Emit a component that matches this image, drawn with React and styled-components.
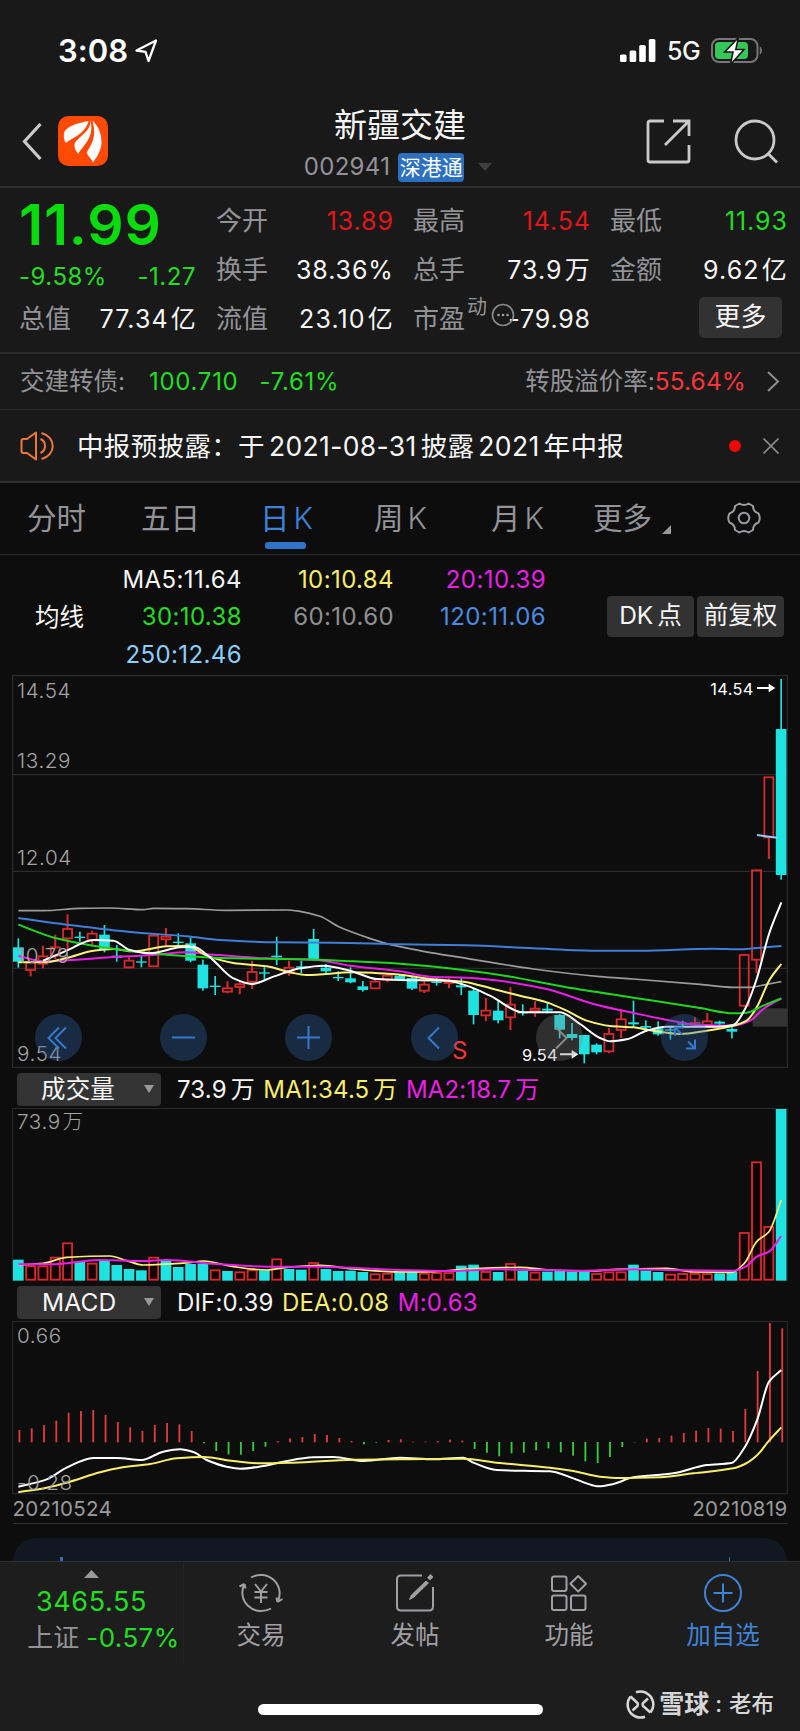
import React from "react";
import styled, { createGlobalStyle } from "styled-components";

const C = {
  up: "#e0171b",
  upSoft: "#f8363a",
  down: "#22dd22",
  white: "#f6f6f6",
  grey: "#939397",
  blue: "#3f83d8",
  yellow: "#f7ee6c",
  magenta: "#ea1fe6",
  cyan: "#1fe3e0",
  barRed: "#d6292d",
  grid: "#2b2b2b",
};

const Global = createGlobalStyle`
  *, *::before, *::after { box-sizing: border-box; }
  body {
    margin: 0;
    background: #0d0d0d;
    font-family: Inter, "Noto Sans CJK SC", sans-serif;
    font-weight: 400;
    color: ${C.white};
  }
`;

const Screen = styled.div`
  width: 800px;
  height: 1731px;
  overflow: hidden;
  display: flex;
  flex-direction: column;
  background: #0d0d0d;
  line-height: 1;
  white-space: nowrap;
`;

const Colored = styled.span`
  color: ${(p) => p.$c};
  letter-spacing: ${(p) => p.$ls || 0}px;
`;
const Unit = styled.span`
  margin-left: ${(p) => p.$gap ?? 4}px;
`;

/* ---------- status bar ---------- */
const StatusBar = styled.header`
  height: 96px;
  padding: 6px 37px 0 58px;
  display: flex;
  align-items: center;
  background: #191919;
`;
const Clock = styled.span`
  font-size: 31px;
  font-weight: 600;
  letter-spacing: 0.1px;
  margin-right: 6px;
  color: #fff;
`;
const StatusRight = styled.div`
  margin-left: auto;
  display: flex;
  align-items: center;
`;
const Network = styled.span`
  margin: 1px 11px 0 11px;
  font-size: 25px;
  font-weight: 500;
  letter-spacing: -0.6px;
`;

/* ---------- title bar ---------- */
const TitleBar = styled.div`
  height: 92px;
  display: grid;
  grid-template-columns: 260px 1fr 260px;
  border-bottom: 2px solid #2e2e2e;
  background: #191919;
`;
const NavLeft = styled.div`
  display: flex;
  align-items: center;
  gap: 16px;
  padding: 1px 0 0 22px;
`;
const NavRight = styled.div`
  display: flex;
  align-items: center;
  justify-content: flex-end;
  gap: 43px;
  padding: 1px 21px 0 0;
`;
const TitleStack = styled.div`
  display: flex;
  flex-direction: column;
  align-items: center;
  padding-top: 12px;
`;
const StockName = styled.h1`
  margin: 0;
  font-size: 33px;
  font-weight: 400;
  line-height: 34px;
`;
const CodeRow = styled.div`
  display: flex;
  align-items: center;
  margin: 11px 0 0 -4px;
  font-size: 24px;
  letter-spacing: 0.3px;
  color: ${C.grey};
`;
const Tag = styled.span`
  margin: 0 14px 0 8px;
  width: 66px;
  height: 29px;
  border-radius: 4px;
  display: flex;
  align-items: center;
  justify-content: center;
  background: #2e70c0;
  color: #fff;
  font-size: 21px;
  letter-spacing: 0;
`;

/* ---------- quote ---------- */
const Quote = styled.section`
  height: 166px;
  padding: 9px 13px 0 19px;
  display: grid;
  grid-template-columns: repeat(4, 177px);
  grid-template-rows: repeat(3, 49px);
  column-gap: 20px;
  border-bottom: 2px solid #2b2b2b;
  background: #191919;
`;
const PriceBlock = styled.div`
  grid-row: span 2;
  display: flex;
  flex-direction: column;
  color: ${C.down};
`;
const Price = styled.strong`
  margin-top: -1px;
  font-size: 57px;
  font-weight: 600;
  line-height: 58px;
  letter-spacing: 0.8px;
  color: #08dc0c;
`;
const Change = styled.div`
  display: flex;
  justify-content: space-between;
  margin-top: 10px;
  font-size: 24px;
  line-height: 26px;
  letter-spacing: 0.5px;
`;
const Cell = styled.div`
  position: relative;
  display: flex;
  align-items: center;
  justify-content: space-between;
  font-size: 26px;
`;
const Label = styled.span`
  color: ${C.grey};
`;
const Value = styled.span`
  margin-right: -0.8px;
  color: ${(p) => p.$c || C.white};
  font-size: 25px;
  letter-spacing: ${(p) => p.$ls ?? 0.8}px;
`;
const Sup = styled.span`
  margin: 0 4px 0 2px;
  font-size: 20px;
  color: ${C.grey};
  position: relative;
  top: -6px;
`;
const PeHint = styled.span`
  position: absolute;
  left: 52px;
  top: 8px;
  display: flex;
`;
const MoreButton = styled.button`
  justify-self: end;
  align-self: center;
  margin: 0 5px 3px 0;
  width: 83px;
  height: 41px;
  padding: 0 0 1px;
  border: 0;
  border-radius: 5px;
  background: #323232;
  color: ${C.white};
  font: inherit;
  font-size: 26px;
`;

/* ---------- linked bond / notice ---------- */
const BondRow = styled.div`
  height: 57px;
  padding: 0 20px 0 20px;
  display: flex;
  align-items: center;
  font-size: 24.5px;
  color: ${C.grey};
  border-bottom: 1px solid #2b2b2b;
  background: #191919;
`;
const BondValue = styled.span`
  margin-left: ${(p) => p.$gap}px;
  color: ${C.down};
  font-size: 24px;
  letter-spacing: 0.7px;
`;
const BondRight = styled.span`
  margin-left: auto;
  margin-right: 21px;
`;
const Notice = styled.div`
  height: 73px;
  padding: 0 21px 0 20px;
  display: flex;
  align-items: center;
  font-size: 26.5px;
  letter-spacing: 0.35px;
  border-bottom: 2px solid #303030;
  background: #191919;
`;
const NoticeText = styled.span`
  margin-left: 22px;
  flex: 1;
`;
const Dot = styled.i`
  width: 12px;
  height: 12px;
  margin-right: 22px;
  border-radius: 50%;
  background: #f20505;
`;

/* ---------- period tabs ---------- */
const Tabs = styled.nav`
  height: 72px;
  padding-left: 27px;
  display: grid;
  grid-template-columns: 114px 119px 114px 117px 102px 134px 60px;
  align-items: stretch;
  border-bottom: 1px solid #2b2b2b;
  font-size: 29.5px;
  color: ${C.grey};
`;
const Tab = styled.div`
  position: relative;
  display: flex;
  align-items: center;
  padding-bottom: 1px;
  color: ${(p) => (p.$active ? C.blue : C.grey)};
  &::after {
    content: "";
    display: ${(p) => (p.$active ? "block" : "none")};
    position: absolute;
    left: 5px;
    bottom: 5px;
    width: 41px;
    height: 7px;
    border-radius: 3px;
    background: #2f74c8;
  }
`;
const TabK = styled.span`
  margin-left: 4px;
  font-size: 30px;
  font-weight: 300;
`;
const MoreMark = styled.span`
  margin: 22px 0 0 10px;
  display: flex;
`;

/* ---------- moving average legend ---------- */
const Legend = styled.section`
  height: 120px;
  padding: 4px 16px 0 35px;
  display: flex;
  align-items: center;
`;
const LegendTitle = styled.span`
  width: 48px;
  font-size: 24.5px;
`;
const LegendGrid = styled.div`
  display: grid;
  grid-template-columns: 159px 152px 152px;
  grid-auto-rows: 37.6px;
  align-items: center;
  justify-items: end;
  font-size: 24px;
  flex: 1;
  justify-content: start;
`;
const Pill = styled.button`
  width: 87px;
  height: 41px;
  margin: -2px 0 0 3px;
  padding: 0 0 1px;
  border: 0;
  border-radius: 4px;
  background: #323232;
  color: ${C.white};
  font: inherit;
  font-size: 24.5px;
`;

/* ---------- charts ---------- */
const ChartBox = styled.div`
  position: relative;
  height: ${(p) => p.$h}px;
`;
const Plot = styled.svg`
  display: block;
  width: 800px;
  height: ${(p) => p.$h}px;
  overflow: visible;
  font-family: Inter, "Noto Sans CJK SC", sans-serif;
`;
const ControlRow = styled.div`
  position: absolute;
  left: 35px;
  top: 338.5px;
  width: 673px;
  display: flex;
  justify-content: space-between;
`;
const RoundButton = styled.button`
  width: 47px;
  height: 47px;
  padding: 0;
  border: 0;
  border-radius: 50%;
  background: ${(p) => (p.$muted ? "rgba(125,125,130,.3)" : "rgba(49,100,170,.35)")};
  svg { display: block; }
`;
const IndicatorBar = styled.div`
  height: 40px;
  padding: 2px 0 0 17px;
  display: flex;
  align-items: center;
  font-size: 24px;
  letter-spacing: 0.15px;
`;
const Select = styled.div`
  width: 144px;
  height: 33px;
  margin-right: 16px;
  padding: 0 7px 0 ${(p) => p.$pad}px;
  display: flex;
  align-items: center;
  justify-content: space-between;
  border-radius: 4px;
  background: #333;
  font-size: 24.5px;
`;
const Stat = styled.span`
  margin-right: 8.5px;
  padding-top: 1px;
  color: ${(p) => p.$c};
`;
const Dates = styled.div`
  height: 30px;
  margin: 0 12.5px;
  padding-top: 1px;
  display: flex;
  align-items: center;
  justify-content: space-between;
  font-size: 20.5px;
  letter-spacing: 0.3px;
  color: #9a9a9a;
  border-bottom: 1px solid #333;
`;
const Card = styled.div`
  height: 23px;
  margin: 14px 13px 0;
  padding: 19px 57px 0 47px;
  display: flex;
  justify-content: space-between;
  border-radius: 24px 24px 0 0;
  background: #111821;
`;
const CardTick = styled.i`
  width: ${(p) => p.$w}px;
  height: 4px;
  background: #326bb3;
`;

/* ---------- bottom bar ---------- */
const BottomBar = styled.footer`
  flex: 1;
  border-top: 1px solid #303030;
  background: #1d1d1d;
`;
const BottomItems = styled.div`
  height: 102px;
  display: grid;
  grid-template-columns: 184px repeat(4, 154px);
`;
const IndexBox = styled.div`
  padding-top: 8px;
  display: flex;
  flex-direction: column;
  align-items: center;
  border-right: 1px solid #242424;
`;
const IndexValue = styled.span`
  margin-top: 9px;
  font-size: 27px;
  line-height: 30px;
  letter-spacing: 0.6px;
  color: ${C.down};
`;
const IndexLine = styled.span`
  display: flex;
  align-items: center;
  gap: 7px;
  margin: 5px 0 0 24px;
  font-size: 26px;
  line-height: 32px;
  color: ${C.grey};
`;
const Action = styled.div`
  padding-top: 11px;
  display: flex;
  flex-direction: column;
  align-items: center;
  gap: 8px;
  font-size: 24.5px;
  line-height: 28px;
  color: ${(p) => p.$c || "#a0a0a4"};
`;
const HomeArea = styled.div`
  height: 67px;
  padding: 0 26px 0 258px;
  display: flex;
  align-items: center;
`;
const HomeIndicator = styled.i`
  width: 285px;
  height: 11px;
  margin-top: 24px;
  border-radius: 6px;
  background: #fff;
`;
const Watermark = styled.span`
  margin: 14px 0 0 auto;
  display: flex;
  align-items: center;
  font-size: 22.5px;
  font-weight: 500;
  color: #d6d6d6;
`;
const WatermarkName = styled.b`
  margin: 0 6px 0 4px;
  font-size: 25px;
  font-weight: 700;
`;
const WatermarkUser = styled.span`
  margin-left: 7px;
`;

/* ---------- data: [rising, high, bodyTop, bodyBottom, low] on the 3x grid ---------- */
const candles = [
  [0, 178, 205, 248, 266], [1, 245, 250, 273, 292], [1, 200, 232, 254, 268], [1, 167, 205, 230, 240],
  [1, 106, 150, 178, 210], [0, 158, 173, 177, 188], [1, 155, 164, 183, 202], [0, 138, 167, 210, 220],
  [0, 198, 230, 236, 248], [1, 232, 245, 265, 268], [0, 230, 247, 251, 265], [1, 168, 170, 262, 262],
  [1, 147, 173, 181, 205], [0, 163, 188, 192, 202], [0, 175, 193, 245, 250], [0, 242, 257, 328, 335],
  [0, 291, 320, 324, 348], [1, 307, 328, 338, 343], [1, 310, 316, 324, 346], [1, 245, 279, 308, 330],
  [0, 265, 280, 284, 300], [0, 173, 230, 235, 258], [1, 245, 266, 282, 290], [0, 245, 262, 266, 282],
  [0, 150, 180, 240, 245], [0, 255, 266, 277, 282], [0, 277, 294, 298, 306], [0, 265, 298, 310, 313],
  [0, 306, 322, 333, 338], [1, 298, 308, 328, 330], [1, 284, 290, 302, 310], [0, 285, 290, 300, 305],
  [0, 290, 297, 329, 333], [1, 307, 317, 335, 342], [0, 298, 308, 312, 320], [1, 298, 308, 312, 328],
  [0, 295, 319, 325, 348], [0, 330, 335, 408, 436], [1, 357, 395, 409, 427], [0, 365, 395, 424, 433],
  [1, 325, 377, 415, 453], [0, 376, 399, 403, 410], [1, 367, 389, 396, 413], [0, 368, 389, 395, 403],
  [0, 405, 408, 452, 478], [0, 432, 465, 477, 484], [0, 468, 468, 526, 553], [0, 493, 497, 520, 526],
  [1, 447, 465, 517, 523], [1, 390, 421, 453, 477], [0, 365, 430, 436, 445], [0, 424, 441, 446, 458],
  [0, 427, 448, 466, 470], [0, 440, 451, 455, 482], [0, 425, 433, 437, 448], [1, 415, 432, 436, 445],
  [1, 402, 427, 438, 440], [0, 425, 428, 434, 438], [0, 445, 450, 458, 478], [1, 227, 228, 380, 383],
  [1, -28, -26, 242, 282], [1, -307, -305, -125, -60], [0, -600, -450, -12, 2],
];

const volumes = [
  [0, 62], [1, 44], [1, 44], [1, 70], [1, 113], [0, 56], [1, 52], [0, 58], [0, 46], [0, 34], [0, 30], [1, 70],
  [0, 62], [0, 40], [0, 49], [0, 50], [1, 32], [0, 28], [1, 26], [1, 32], [0, 30], [1, 65], [0, 34], [0, 32],
  [1, 54], [0, 34], [0, 28], [0, 29], [0, 25], [1, 20], [1, 22], [0, 26], [0, 26], [1, 22], [1, 24], [1, 24],
  [0, 44], [0, 47], [1, 27], [0, 25], [1, 51], [0, 29], [1, 25], [0, 26], [0, 31], [0, 25], [0, 25], [1, 21],
  [1, 26], [1, 26], [0, 47], [0, 29], [0, 25], [1, 19], [1, 21], [1, 21], [1, 21], [0, 21], [0, 26], [1, 144],
  [1, 356], [1, 162], [0, 514],
];

const macd = [
  37, 42, 52, 65, 89, 94, 97, 82, 61, 45, 34, 52, 58, 54, 34, -4, -27, -37, -38, -27, -14, 4, 12, 16, 25, 22, 13,
  4, -7, -2, 7, 9, 2, 2, 4, 8, 5, -21, -32, -43, -34, -32, -25, -19, -31, -41, -58, -63, -45, -15, -1, 11, 13, 20,
  28, 35, 43, 41, 34, 100, 214, 358, 342,
];

const lines = {
  ma60: "55,95 130,95 240,88 330,87 430,92 460,88 560,89 680,94 860,93 900,97 960,112 1020,145 1100,175 1160,194 1200,203 1270,217 1400,238 1600,270 1800,293 1900,300 2100,316 2200,325 2250,325 2300,316 2344,308",
  ma120: "55,117 200,137 400,160 560,172 660,183 830,190 1000,191 1200,196 1400,199 1600,208 1800,215 1920,215 2140,209 2220,211 2260,208 2344,201",
  ma30: "55,137 165,177 280,200 400,217 500,227 700,238 900,241 1060,247 1200,254 1290,262 1500,288 1700,325 1900,356 2100,387 2200,403 2240,401 2290,380 2344,358",
  ma20: "55,230 130,247 200,244 330,235 460,228 560,220 640,227 800,238 950,243 1050,260 1200,277 1290,293 1400,296 1480,303 1640,330 1780,375 1900,402 2030,428 2100,438 2200,440 2250,425 2290,390 2344,358",
  ma10: "55,250 130,250 200,237 280,215 340,210 400,217 500,202 560,200 620,230 700,252 800,262 870,280 920,288 1060,280 1200,287 1290,300 1390,308 1480,330 1560,350 1640,370 1700,395 1760,425 1830,441 1900,445 1960,455 2040,465 2120,455 2200,440 2240,425 2270,385 2310,300 2344,255",
  ma5: "129,245 160,232 200,215 280,183 340,185 390,213 450,223 540,205 580,203 630,235 700,298 755,315 820,293 900,268 970,260 1050,275 1130,300 1200,303 1340,305 1400,320 1470,350 1570,400 1680,400 1740,435 1800,477 1830,487 1880,481 1940,455 2000,443 2150,443 2200,438 2235,390 2270,300 2307,165 2344,70",
  vol1: "55,615 130,610 200,592 330,588 380,602 430,615 560,609 610,603 700,620 800,630 860,622 960,616 1060,627 1200,636 1300,635 1400,627 1560,622 1650,630 1770,633 1850,628 2000,625 2080,636 2195,637 2233,610 2270,545 2307,515 2344,420",
  vol2: "55,613 150,613 300,600 430,603 500,600 650,612 800,620 950,620 1200,630 1340,633 1500,628 1750,632 1900,628 2050,631 2200,632 2240,618 2270,590 2307,575 2344,528",
  dif: "55,620 140,598 200,563 280,534 350,534 425,540 490,515 540,508 580,516 620,540 680,560 720,566 790,558 850,545 940,532 1000,531 1090,543 1200,533 1300,538 1390,533 1420,548 1490,570 1650,574 1720,595 1760,610 1795,619 1840,612 1900,592 2020,580 2120,555 2195,549 2235,500 2272,418 2307,305 2344,270",
  dea: "55,637 140,623 210,605 300,577 360,563 450,552 530,535 610,531 700,543 780,550 880,548 1060,539 1200,538 1390,536 1490,548 1650,563 1720,573 1800,590 1860,594 1980,592 2080,580 2200,565 2235,552 2272,525 2307,482 2344,442",
};

/* Monotone cubic through the listed points, so flat stretches never overshoot. */
function smooth(list) {
  const p = list.split(" ").map((s) => s.split(",").map(Number));
  const n = p.length;
  const slope = p.slice(1).map((b, i) => (b[1] - p[i][1]) / (b[0] - p[i][0]));
  const m = p.map((_, i) => {
    if (i === 0) return slope[0];
    if (i === n - 1) return slope[n - 2];
    const a = slope[i - 1];
    const b = slope[i];
    return a * b <= 0 ? 0 : (2 * a * b) / (a + b);
  });
  let d = `M${p[0][0]} ${p[0][1]}`;
  for (let i = 1; i < n; i++) {
    const h = (p[i][0] - p[i - 1][0]) / 3;
    d += `C${p[i - 1][0] + h} ${p[i - 1][1] + m[i - 1] * h} ${p[i][0] - h} ${p[i][1] - m[i] * h} ${p[i][0]} ${p[i][1]}`;
  }
  return d;
}

const STEP = 36.91;
const cx = (i) => 55 + i * STEP;

const Line = ({ pts, c, w = 5 }) => <path d={smooth(pts)} fill="none" stroke={c} strokeWidth={w} />;

const AxisLabel = ({ x = 51, y, children }) => (
  <text x={x} y={y} fontSize="62" fill="#a3a3a3" fontWeight="300" letterSpacing="1.8">
    {children}
  </text>
);

const Candle = ({ i, d: [rising, high, top, bottom, low] }) => {
  const x = cx(i);
  if (rising) {
    return (
      <g stroke={C.barRed} strokeWidth="5.5" fill="none">
        <path d={`M${x} ${high}V${top}M${x} ${bottom}V${low}`} strokeWidth="6" />
        <rect x={x - 13.5} y={top} width="27" height={bottom - top} />
      </g>
    );
  }
  return (
    <g fill={C.cyan}>
      <rect x={x - 2.5} y={high} width="5" height={low - high} />
      <rect x={x - 16} y={top} width="32" height={bottom - top} />
    </g>
  );
};

const PriceChart = () => (
  <Plot $h={393} viewBox="0 0 2400 1179">
    <path
      d="M38 2H2362V1177H38ZM38 299H2362M38 589H2362M38 880H2362"
      stroke={C.grid}
      strokeWidth="4"
      fill="none"
    />
    <rect x="2258" y="1000" width="104" height="55" fill="#343434" />
    <g transform="translate(0 612)">
      {candles.map((d, i) => (
        <Candle key={i} i={i} d={d} />
      ))}
      <Line pts={lines.ma60} c="#9c9c9c" />
      <Line pts={lines.ma120} c="#3f7fd6" w={6} />
      <Line pts={lines.ma20} c={C.magenta} w={6} />
      <Line pts={lines.ma10} c="#fbf27a" w={6} />
      <Line pts={lines.ma30} c="#1fd61f" w={6} />
      <Line pts={lines.ma5} c="#fff" w={6} />
      <path d="M2271 -132L2332 -124" stroke="#8fcdf7" strokeWidth="6" />
    </g>
    <AxisLabel y={70}>14.54</AxisLabel>
    <AxisLabel y={278}>13.29</AxisLabel>
    <AxisLabel y={571}>12.04</AxisLabel>
    <AxisLabel y={864}>10.79</AxisLabel>
    <AxisLabel y={1157}>9.54</AxisLabel>
    <g fill="#fff" fontSize="49" letterSpacing="1">
      <text x="2131" y="59">14.54</text>
      <text x="1566" y="1157">9.54</text>
      <path d="M2271 36H2306V26L2326 39L2306 52V42H2271Z" />
      <path d="M1680 1135H1715V1125L1735 1138L1715 1151V1141H1680Z" />
    </g>
    <text x="1356" y="1152" fontSize="72" fill={C.upSoft}>S</text>
  </Plot>
);

const VolumeChart = () => (
  <Plot $h={173} viewBox="0 0 2400 519">
    <path d="M38 1.5H2362V519M38 1.5V519" stroke={C.grid} strokeWidth="3" fill="none" />
    {volumes.map(([rising, h], i) =>
      rising ? (
        <rect key={i} x={cx(i) - 13.5} y={519 - h} width="27" height={h - 4} fill="#120000" stroke={C.barRed} strokeWidth="5.5" />
      ) : (
        <rect key={i} x={cx(i) - 16} y={517 - h} width="32" height={h + 1} fill={C.cyan} />
      )
    )}
    <g transform="translate(0 -144)">
      <Line pts={lines.vol1} c="#fbf27a" />
      <Line pts={lines.vol2} c={C.magenta} w={6} />
    </g>
    <AxisLabel y={64}>
      73.9<tspan dx="5">万</tspan>
    </AxisLabel>
  </Plot>
);

const MacdChart = () => (
  <Plot $h={173} viewBox="0 0 2400 519">
    <path d="M38 1.5H2362V518H38Z" stroke={C.grid} strokeWidth="3" fill="none" />
    {macd.map((v, i) => (
      <rect
        key={i}
        x={cx(i) + 0.5}
        y={v > 0 ? 364 - v : 363}
        width="5.5"
        height={Math.abs(v)}
        fill={v > 0 ? "#e03a3e" : "#35cf35"}
      />
    ))}
    <g transform="translate(0 -123)">
      <Line pts={lines.dif} c="#fff" w={6} />
      <Line pts={lines.dea} c={C.yellow} w={6} />
    </g>
    <AxisLabel y={65}>0.66</AxisLabel>
    <AxisLabel y={507}>-0.28</AxisLabel>
  </Plot>
);

/* ---------- icons ---------- */
const Triangle = ({ w, h, dir = "down", c = "#9a9a9a" }) => (
  <svg width={w} height={h} viewBox="0 0 10 10" preserveAspectRatio="none">
    <path d={{ down: "M0 0H10L5 10Z", up: "M0 10H10L5 0Z", corner: "M10 0V10H0Z" }[dir]} fill={c} />
  </svg>
);

const LocationIcon = () => (
  <svg width="24" height="24" viewBox="0 0 24 24" fill="none" stroke="#fff" strokeWidth="2.3" strokeLinejoin="round">
    <path d="M22 1.500L2.500 11.500L11.500 12.800L14.500 22Z" />
  </svg>
);
const SignalIcon = () => (
  <svg width="36" height="24" viewBox="0 0 36 24" fill="#fff">
    <rect x="0" y="15.5" width="6.6" height="7.5" rx="1.6" />
    <rect x="9.6" y="11.5" width="6.6" height="11.5" rx="1.6" />
    <rect x="19.2" y="6" width="6.6" height="17" rx="1.6" />
    <rect x="28.8" y="0" width="6.6" height="23" rx="1.6" />
  </svg>
);
const BatteryIcon = () => (
  <svg width="52" height="28" viewBox="0 0 52 28">
    <rect x="1" y="2" width="45.5" height="23" rx="7" fill="none" stroke="#77777b" strokeWidth="2" />
    <rect x="4" y="5" width="33" height="17" rx="4" fill="#35c759" />
    <path d="M48.8 9.5C51.6 10.5 51.6 16.5 48.8 17.5Z" fill="#77777b" />
    <path d="M27.5 .5L13.8 15H22L19.5 27.5L33 12.5H24.8Z" fill="#fff" stroke="#191919" strokeWidth="1.6" />
  </svg>
);
const Chevron = ({ w, h, sw, flip, c = "#c9c9c9" }) => (
  <svg width={w} height={h} viewBox={`0 0 ${w} ${h}`} fill="none" stroke={c} strokeWidth={sw}>
    <path d={flip ? `M1 1L${w - 2} ${h / 2}L1 ${h - 1}` : `M${w - 1.5} 1L2.5 ${h / 2}L${w - 1.5} ${h - 1}`} />
  </svg>
);
const BrandLogo = () => (
  <svg width="50" height="50" viewBox="0 0 50 50">
    <rect width="50" height="50" rx="10.5" fill="#ff4a06" />
    <g fill="#fff">
      <path d="M30.500 5C19 7 7.500 11 6 17C5.300 20.500 6 24.500 8 27C14 21.500 27 18.500 30.500 5Z" />
      <path d="M32.500 4.500C32.500 17 19 21 16.500 28C16 32 18 35.500 20.500 38C23 30.500 37 23 32.500 4.500Z" />
      <path d="M34.500 4.500C40 10 43.500 17 43.500 26C43.500 34 39 41 35 46.500C33 42 30 40.500 29 37C30 31.500 40 25 34.500 4.500Z" />
    </g>
  </svg>
);
const ShareIcon = () => (
  <svg width="45" height="45" viewBox="0 0 45 45" fill="none" stroke="#c9c9c9" strokeWidth="2.8">
    <path d="M18 2H4Q2 2 2 4V41Q2 43 4 43H41Q43 43 43 41V26" />
    <path d="M27 2H43V17M43 2L19 26" />
  </svg>
);
const SearchIcon = () => (
  <svg width="45" height="45" viewBox="0 0 45 45" fill="none" stroke="#c9c9c9" strokeWidth="2.8">
    <circle cx="21" cy="21" r="19" />
    <path d="M34 34.500L43 43.500" />
  </svg>
);
const DotsIcon = () => (
  <svg width="24" height="24" viewBox="0 0 24 24">
    <circle cx="12" cy="12" r="10.500" fill="none" stroke="#87878b" strokeWidth="1.700" />
    <g fill="#a0a0a4">
      <circle cx="7.500" cy="12" r="1.300" />
      <circle cx="12" cy="12" r="1.300" />
      <circle cx="16.500" cy="12" r="1.300" />
    </g>
  </svg>
);
const SpeakerIcon = () => (
  <svg width="35" height="30" viewBox="0 0 35 30" fill="none" stroke="#f0763a" strokeWidth="2">
    <path d="M1.500 10Q1.500 8 3.500 8H7L16 1.500V28.500L7 22H3.500Q1.500 22 1.500 20Z" strokeLinejoin="round" />
    <path d="M20.500 8C26.500 10.500 26.500 19.500 20.500 22" />
    <path d="M21.500 2C36.500 6 36.500 24 21.500 28" />
  </svg>
);
const CloseIcon = () => (
  <svg width="16" height="16" viewBox="0 0 16 16" stroke="#8a8a8e" strokeWidth="1.600">
    <path d="M.5 .5L15.500 15.500M15.500 .5L.5 15.500" />
  </svg>
);
const GearIcon = () => (
  <svg width="34" height="32" viewBox="0 0 34 32" fill="none" stroke="#9c9ca0" strokeWidth="2">
    <path
      d="M12.500 1.500Q17 4.300 21.500 1.500L26 4Q26 9.500 31.500 11.500Q34 16 31.500 20.500Q26 22.500 26 28L21.500 30.500Q17 27.700 12.500 30.500L8 28Q8 22.500 2.500 20.500Q0 16 2.500 11.500Q8 9.500 8 4Z"
      strokeLinejoin="round"
    />
    <circle cx="17" cy="16" r="5.300" />
  </svg>
);

const controls = [
  { d: "M24 13.500L13.500 24L24 34.500M31 13.500L20.500 24L31 34.500" },
  { d: "M12 23.500H35" },
  { d: "M12 23.500H35M23.500 12V35" },
  { d: "M28 13.500L17.500 24L28 34.500" },
  { d: "M20 13.500L30.500 24L20 34.500", muted: true },
  { d: "M14 22V13.500H22.500M14 13.500L21 20.500M25 34.500H34V25.500M34 34.500L27 27.500" },
];

const TradeIcon = () => (
  <svg width="46" height="40" viewBox="0 0 46 40" fill="none" stroke="#a0a0a4" strokeWidth="2">
    <path d="M13 4.500A19 18.500 0 0 1 39.500 29M39.500 29L38.500 24.500M39.500 29L44.500 26" />
    <path d="M33 35.500A19 18.500 0 0 1 6.500 11M6.500 11L1.500 13.500M6.500 11L7.500 15.500" />
    <path d="M17 11L23 18.500L29 11M23 18.500V30M16.500 19H29.500M16.500 24.500H29.500" />
  </svg>
);
const PostIcon = () => (
  <svg width="40" height="40" viewBox="0 0 40 40" fill="none" stroke="#a0a0a4" strokeWidth="2">
    <path d="M27 2.500H6Q2 2.500 2 6.500V33.500Q2 37.500 6 37.500H34Q38 37.500 38 33.500V14" />
    <path d="M31 8L33.500 10L19 24L14.500 26.500L16.500 22Z" fill="#a0a0a4" strokeWidth="1" />
    <path d="M33.500 6L37 2.500" strokeWidth="4" />
  </svg>
);
const GridIcon = () => (
  <svg width="38" height="40" viewBox="0 0 38 40" fill="none" stroke="#a0a0a4" strokeWidth="2">
    <rect x="2" y="3.500" width="14.500" height="14.500" rx="2" />
    <rect x="2" y="22.500" width="14.500" height="14.500" rx="2" />
    <rect x="21" y="22.500" width="14.500" height="14.500" rx="2" />
    <path d="M28.200 3L36 10.800L28.200 18.600L20.400 10.800Z" strokeLinejoin="round" />
  </svg>
);
const AddIcon = () => (
  <svg width="40" height="40" viewBox="0 0 40 40" fill="none" stroke={C.blue} strokeWidth="2">
    <circle cx="20" cy="20" r="18" />
    <path d="M10.500 20H29.500M20 10.500V29.500" />
  </svg>
);
const SnowballLogo = () => (
  <svg width="29" height="29" viewBox="0 0 29 29" fill="none" stroke="#d6d6d6" strokeWidth="2.600">
    <path d="M10 2.300Q15 .5 20 2.800A13 13 0 0 1 24.500 22.500" />
    <path d="M19 26.700Q14 28.500 9.500 26.500A13 13 0 0 1 4.500 6.500" />
    <path d="M4.500 6.500L11.500 13Q12.500 14.500 11.500 16L6.500 20.500" />
    <path d="M22 8.500L17 13Q16 14.500 17 16L24.500 22.500" />
  </svg>
);

const actions = [
  { Icon: TradeIcon, label: "交易" },
  { Icon: PostIcon, label: "发帖" },
  { Icon: GridIcon, label: "功能" },
  { Icon: AddIcon, label: "加自选", c: C.blue },
];

const averages = [
  ["MA5:11.64", C.white],
  ["10:10.84", C.yellow],
  ["20:10.39", C.magenta],
  ["30:10.38", C.down],
  ["60:10.60", "#8f8f8f"],
  ["120:11.06", "#4a8be0"],
  ["250:12.46", "#8ccdfa"],
];

const Field = ({ label, value, unit, c }) => (
  <Cell>
    <Label>{label}</Label>
    <Value $c={c} $ls={unit ? 1.1 : 0.9}>
      {value}
      {unit && <Unit $gap={2}>{unit}</Unit>}
    </Value>
  </Cell>
);

export default function App() {
  return (
    <Screen>
      <Global />
      <StatusBar>
        <Clock>3:08</Clock>
        <LocationIcon />
        <StatusRight>
          <SignalIcon />
          <Network>5G</Network>
          <BatteryIcon />
        </StatusRight>
      </StatusBar>

      <TitleBar>
        <NavLeft>
          <Chevron w={20} h={37} sw={3.2} />
          <BrandLogo />
        </NavLeft>
        <TitleStack>
          <StockName>新疆交建</StockName>
          <CodeRow>
            002941
            <Tag>深港通</Tag>
            <Triangle w={14} h={8} c="#404040" />
          </CodeRow>
        </TitleStack>
        <NavRight>
          <ShareIcon />
          <SearchIcon />
        </NavRight>
      </TitleBar>

      <Quote>
        <PriceBlock>
          <Price>11.99</Price>
          <Change>
            <span>-9.58%</span>
            <span>-1.27</span>
          </Change>
        </PriceBlock>
        <Field label="今开" value="13.89" c={C.up} />
        <Field label="最高" value="14.54" c={C.up} />
        <Field label="最低" value="11.93" c={C.down} />
        <Field label="换手" value="38.36%" />
        <Field label="总手" value="73.9" unit="万" />
        <Field label="金额" value="9.62" unit="亿" />
        <Field label="总值" value="77.34" unit="亿" />
        <Field label="流值" value="23.10" unit="亿" />
        <Cell>
          <Label>市盈</Label>
          <PeHint>
            <Sup>动</Sup>
            <DotsIcon />
          </PeHint>
          <Value>-79.98</Value>
        </Cell>
        <MoreButton>更多</MoreButton>
      </Quote>

      <BondRow>
        交建转债:
        <BondValue $gap={24}>100.710</BondValue>
        <BondValue $gap={21}>-7.61%</BondValue>
        <BondRight>
          转股溢价率:<Colored $c={C.upSoft} $ls={0.1}>55.64%</Colored>
        </BondRight>
        <Chevron w={13} h={21} sw={2} flip c="#8f8f93" />
      </BondRow>

      <Notice>
        <SpeakerIcon />
        <NoticeText>
          中报预披露：于<Unit>2021-08-31</Unit>
          <Unit>披露</Unit>
          <Unit>2021</Unit>
          <Unit>年中报</Unit>
        </NoticeText>
        <Dot />
        <CloseIcon />
      </Notice>

      <Tabs>
        <Tab>分时</Tab>
        <Tab>五日</Tab>
        <Tab $active>
          日<TabK>K</TabK>
        </Tab>
        <Tab>
          周<TabK>K</TabK>
        </Tab>
        <Tab>
          月<TabK>K</TabK>
        </Tab>
        <Tab>
          更多
          <MoreMark>
            <Triangle w={9} h={9} dir="corner" />
          </MoreMark>
        </Tab>
        <Tab>
          <GearIcon />
        </Tab>
      </Tabs>

      <Legend>
        <LegendTitle>均线</LegendTitle>
        <LegendGrid>
          {averages.map(([t, c]) => (
            <Colored key={t} $c={c} $ls={0.4}>
              {t}
            </Colored>
          ))}
        </LegendGrid>
        <Pill>
          DK<Unit>点</Unit>
        </Pill>
        <Pill>前复权</Pill>
      </Legend>

      <ChartBox $h={393}>
        <PriceChart />
        <ControlRow>
          {controls.map(({ d, muted }) => (
            <RoundButton key={d} $muted={muted}>
              <svg width="47" height="47" fill="none" stroke={muted ? "#8a8a8a" : "#3579c8"} strokeWidth="2">
                <path d={d} />
              </svg>
            </RoundButton>
          ))}
        </ControlRow>
      </ChartBox>

      <IndicatorBar>
        <Select $pad={24}>
          成交量
          <Triangle w={10} h={8} />
        </Select>
        <Stat $c={C.white}>
          73.9<Unit>万</Unit>
        </Stat>
        <Stat $c={C.yellow}>
          MA1:34.5<Unit>万</Unit>
        </Stat>
        <Stat $c={C.magenta}>
          MA2:18.7<Unit>万</Unit>
        </Stat>
      </IndicatorBar>
      <ChartBox $h={173}>
        <VolumeChart />
      </ChartBox>

      <IndicatorBar>
        <Select $pad={25}>
          MACD
          <Triangle w={10} h={8} />
        </Select>
        <Stat $c={C.white}>DIF:0.39</Stat>
        <Stat $c={C.yellow}>DEA:0.08</Stat>
        <Stat $c={C.magenta}>M:0.63</Stat>
      </IndicatorBar>
      <ChartBox $h={173}>
        <MacdChart />
      </ChartBox>

      <Dates>
        <span>20210524</span>
        <span>20210819</span>
      </Dates>
      <Card>
        <CardTick $w={3} />
        <CardTick $w={1.5} />
      </Card>

      <BottomBar>
        <BottomItems>
          <IndexBox>
            <Triangle w={15} h={8} dir="up" />
            <IndexValue>3465.55</IndexValue>
            <IndexLine>
              上证<Colored $c={C.down} $ls={0.4}>-0.57%</Colored>
            </IndexLine>
          </IndexBox>
          {actions.map(({ Icon, label, c }) => (
            <Action key={label} $c={c}>
              <Icon />
              {label}
            </Action>
          ))}
        </BottomItems>
        <HomeArea>
          <HomeIndicator />
          <Watermark>
            <SnowballLogo />
            <WatermarkName>雪球</WatermarkName>:
            <WatermarkUser>老布</WatermarkUser>
          </Watermark>
        </HomeArea>
      </BottomBar>
    </Screen>
  );
}
